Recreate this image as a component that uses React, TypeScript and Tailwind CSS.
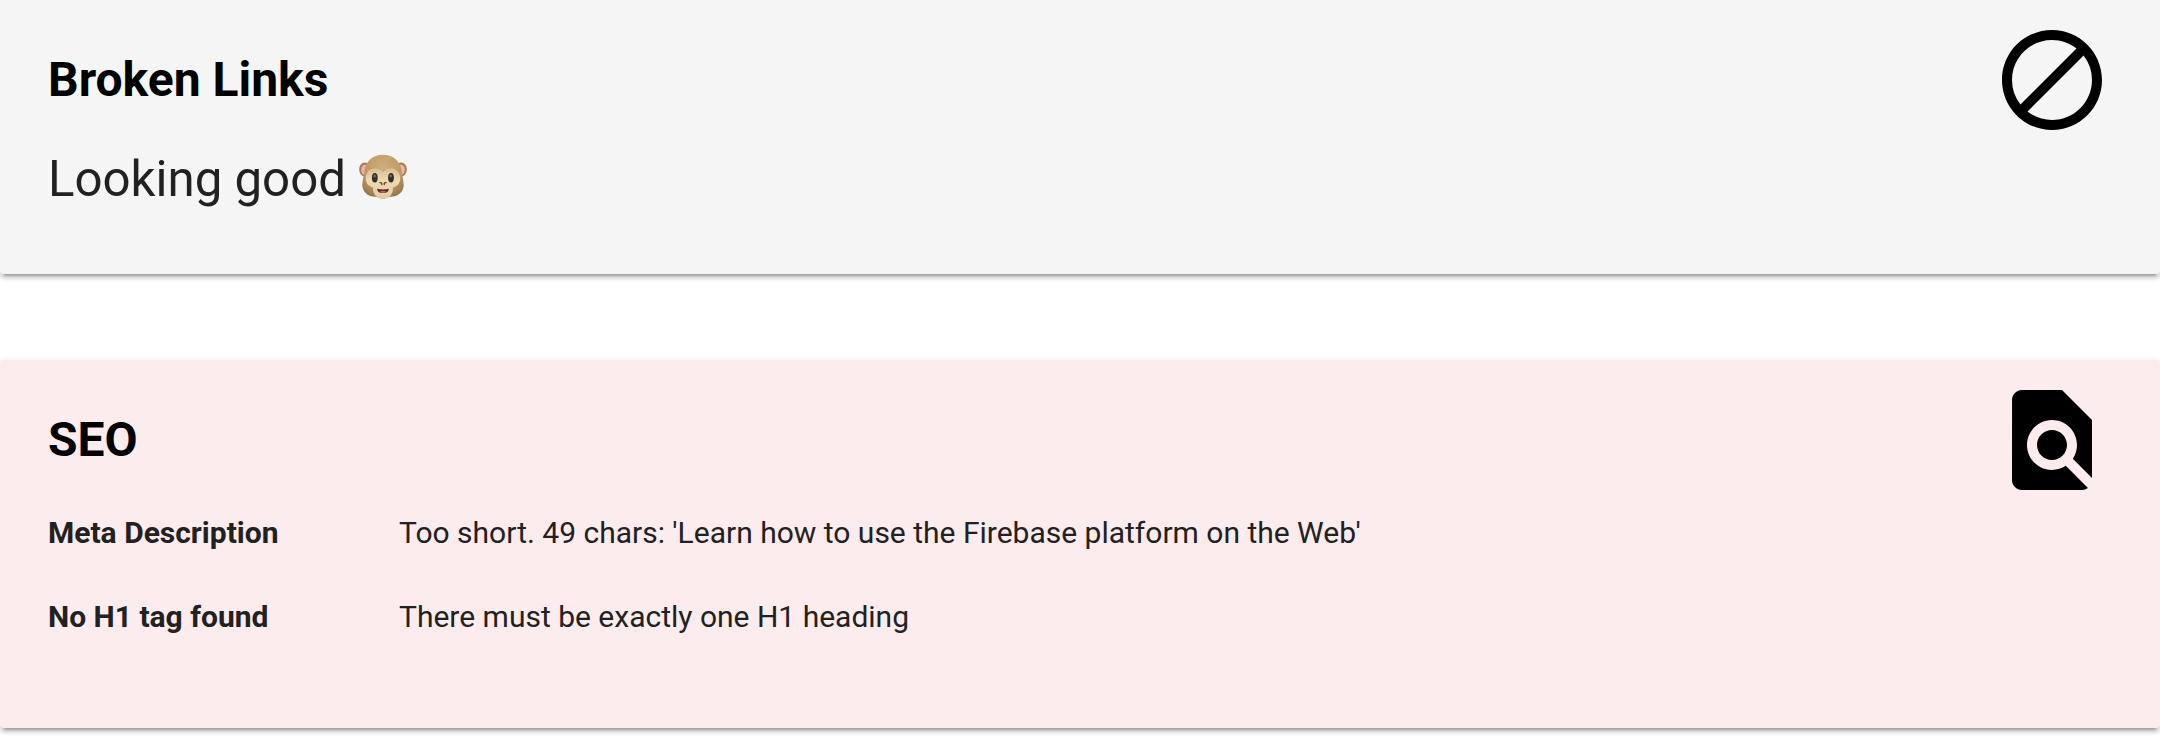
import { MdBlock, MdFindInPage } from "react-icons/md";

function Monkey() {
  return (
    <svg viewBox="0 0 48 46" className="h-[46px] w-12" role="img" aria-label="monkey face">
      <defs>
        <radialGradient id="fur" cx="50%" cy="28%" r="72%">
          <stop offset="0" stopColor="#d0ad7b" />
          <stop offset="0.65" stopColor="#bd9862" />
          <stop offset="1" stopColor="#97764a" />
        </radialGradient>
        <linearGradient id="face" x1="0" y1="0" x2="0" y2="1">
          <stop offset="0" stopColor="#d9bf92" />
          <stop offset="0.4" stopColor="#eed9b2" />
          <stop offset="1" stopColor="#e3cca2" />
        </linearGradient>
      </defs>
      <ellipse cx="5.8" cy="15.5" rx="5.6" ry="7" fill="#a17e50" />
      <ellipse cx="42.2" cy="15.5" rx="5.6" ry="7" fill="#a17e50" />
      <ellipse cx="6" cy="15.8" rx="3.9" ry="5.3" fill="#edafac" />
      <ellipse cx="42" cy="15.8" rx="3.9" ry="5.3" fill="#edafac" />
      <path d="M24 .7C14 .7 6.5 7 5.5 17 5 22 3.3 26 3.3 31c0 7 6 11.8 13 11.8 2.4 0 4.2 1.9 7.7 1.9s5.3-1.9 7.7-1.9c7 0 13-4.8 13-11.8 0-5-1.7-9-2.2-14C41.5 7 34 .7 24 .7Z" fill="url(#fur)" />
      <path d="M24 18.2c-2-2.5-4.5-3.7-8-3.7-5.8 0-9.2 4.4-9.2 10 0 5 3.1 7.9 7.2 9-.4 6.4 3.4 11.2 10 11.2s10.4-4.8 10-11.2c4.1-1.1 7.2-4 7.2-9 0-5.6-3.4-10-9.2-10-3.5 0-6 1.2-8 3.7Z" fill="url(#face)" />
      <ellipse cx="15.8" cy="23.8" rx="2.9" ry="4.8" fill="#33302c" />
      <ellipse cx="32" cy="23.8" rx="2.9" ry="4.8" fill="#33302c" />
      <ellipse cx="15.6" cy="22" rx="1.2" ry="1.6" fill="#697178" />
      <ellipse cx="31.8" cy="22" rx="1.2" ry="1.6" fill="#697178" />
      <path d="M21 28.7c1.4-.3 2 .5 1.8 1.8M27 28.7c-1.4-.3-2 .5-1.8 1.8" fill="none" stroke="#5b4028" strokeWidth="1.3" strokeLinecap="round" />
      <path d="M18.3 34.8c3.6.9 7.8.9 11.4 0 .3 2.7-2.1 4.3-5.7 4.3s-6-1.6-5.7-4.3Z" fill="#5d2926" />
      <path d="M20.5 37.7c2-1 5-1 7 0-1.8 1.3-5.2 1.3-7 0Z" fill="#d9686a" />
    </svg>
  );
}

const rows = [
  ["Meta Description", "Too short. 49 chars: 'Learn how to use the Firebase platform on the Web'"],
  ["No H1 tag found", "There must be exactly one H1 heading"],
];

export default function App() {
  return (
    <main className="flex h-[742px] w-full flex-col gap-[86px] overflow-hidden bg-white font-['Roboto',sans-serif] text-[#212121]">
      <section className="flex h-[274px] shrink-0 items-start justify-between rounded-[4px] bg-[#f5f5f5] px-12 shadow-[0_4px_4px_0_rgba(0,0,0,0.14),0_6px_2px_-4px_rgba(0,0,0,0.2),0_2px_10px_0_rgba(0,0,0,0.12)]">
        <div className="pt-12">
          <h2 className="text-[48px] font-bold leading-[64px] text-black">Broken Links</h2>
          <p className="mt-[35px] flex items-center gap-[13px] text-[49.2px] leading-[64px]">
            Looking good
            <span className="-mt-1">
              <Monkey />
            </span>
          </p>
        </div>
        <MdBlock className="mt-5 h-[120px] w-[120px] text-black" />
      </section>
      <section className="flex h-[368px] shrink-0 items-start justify-between rounded-[4px] bg-[#fdeced] px-12 shadow-[0_4px_4px_0_rgba(0,0,0,0.14),0_6px_2px_-4px_rgba(0,0,0,0.2),0_2px_10px_0_rgba(0,0,0,0.12)]">
        <div className="pt-12">
          <h2 className="text-[48px] font-bold leading-[64px] text-black">SEO</h2>
          <dl className="mt-[18px]">
            {rows.map(([k, v]) => (
              <div key={k} className="flex h-[84px] items-center text-[30px]">
                <dt className="w-[351px] font-bold">{k}</dt>
                <dd>{v}</dd>
              </div>
            ))}
          </dl>
        </div>
        <MdFindInPage className="mt-5 h-[120px] w-[120px] text-black" />
      </section>
    </main>
  );
}
